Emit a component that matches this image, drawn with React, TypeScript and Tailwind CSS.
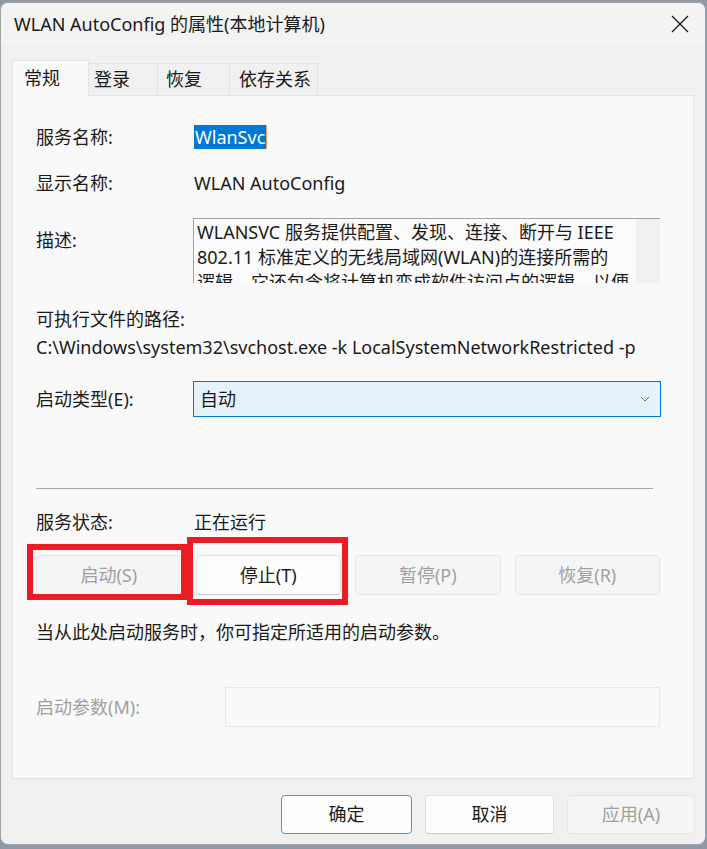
import React from "react";

type BtnProps = {
  label: string;
  disabled?: boolean;
  primary?: boolean;
  className?: string;
};

function WinButton({ label, disabled, primary, className = "" }: BtnProps) {
  const look = disabled
    ? "bg-[#f5f5f5] border-[#e6e6e6] text-[#a0a0a0]"
    : primary
    ? "bg-[#fdfdfd] border-[#4a94dd] text-[#1a1a1a]"
    : "bg-[#fdfdfd] border-[#e0e0e0] border-b-[#cccccc] text-[#1a1a1a]";
  return (
    <div
      className={`flex items-center justify-center rounded-[4px] border ${look} ${className}`}
    >
      {label}
    </div>
  );
}

function Tab({
  label,
  active,
  width,
  pad,
}: {
  label: string;
  active?: boolean;
  width: string;
  pad: string;
}) {
  return active ? (
    <div
      className={`${width} ${pad} relative z-10 -mb-px flex h-[36px] items-center border border-b-0 border-[#e3e3e3] bg-[#f9f9f9]`}
    >
      {label}
    </div>
  ) : (
    <div
      className={`${width} ${pad} flex h-[32px] items-center border border-b-0 border-l-0 border-[#e3e3e3] bg-[#f0f0f0] text-[#1a1a1a]`}
    >
      {label}
    </div>
  );
}

export default function App() {
  return (
    <div className="h-[849px] w-[707px] overflow-hidden bg-[#8f9aa6] pt-[2px] font-['Noto_Sans','Noto_Sans_CJK_SC',sans-serif] text-[18px] text-[#1a1a1a]">
      <div className="flex h-[843px] w-[706px] flex-col overflow-hidden rounded-[8px] border border-[#a3a3a3] bg-[#f0f0f0]">
        {/* Title bar */}
        <div className="flex h-[42px] items-center justify-between bg-[#f3f3f3] pl-[13px] pr-[15px]">
          <span className="leading-[26px]">WLAN AutoConfig 的属性(本地计算机)</span>
          <svg width="18" height="18" viewBox="0 0 18 18" className="mr-[1px]">
            <path d="M1 1 L17 17 M17 1 L1 17" stroke="#1a1a1a" strokeWidth="1.3" fill="none" />
          </svg>
        </div>

        {/* Tabs + page */}
        <div className="px-[11px] pt-[15px]">
          <div className="flex h-[35px] items-end">
            <Tab label="常规" active width="w-[77px]" pad="pl-[11px]" />
            <Tab label="登录" width="w-[69px]" pad="pl-[5px]" />
            <Tab label="恢复" width="w-[72px]" pad="pl-[8px]" />
            <Tab label="依存关系" width="w-[88px]" pad="pl-[9px]" />
          </div>

          <div className="h-[684px] border border-[#e3e3e3] bg-[#f9f9f9] pl-[23px]">
            {/* 服务名称 */}
            <div className="mt-[28px] flex h-[26px] items-center">
              <div className="w-[158px]">服务名称:</div>
              <span className="inline-block h-[24px] border-r border-[#f0a050] bg-[#0078d7] pl-[1px] pr-[1px] leading-[24px] text-white">
                WlanSvc
              </span>
            </div>

            {/* 显示名称 */}
            <div className="mt-[20px] flex h-[26px] items-center">
              <div className="w-[158px]">显示名称:</div>
              <div>WLAN AutoConfig</div>
            </div>

            {/* 描述 */}
            <div className="mt-[22px] flex h-[65px] items-start">
              <div className="w-[157px] pt-[9px] leading-[26px]">描述:</div>
              <div className="flex h-[65px] w-[467px] overflow-hidden border-l border-t border-[#a0a0a0] bg-[#fbfbfb]">
                <div className="flex-1 overflow-hidden pl-[3px] pt-[1px] leading-[25px] whitespace-nowrap">
                  WLANSVC 服务提供配置、发现、连接、断开与 IEEE
                  <br />
                  802.11 标准定义的无线局域网(WLAN)的连接所需的
                  <br />
                  逻辑。它还包含将计算机变成软件访问点的逻辑，以便
                </div>
                <div className="w-[24px] shrink-0 bg-[#f0f0f0]" />
              </div>
            </div>

            {/* 路径 */}
            <div className="mt-[23px] h-[26px] leading-[26px]">可执行文件的路径:</div>
            <div className="mt-[2px] h-[26px] whitespace-nowrap leading-[26px]">
              C:\Windows\system32\svchost.exe -k LocalSystemNetworkRestricted -p
            </div>

            {/* 启动类型 */}
            <div className="mt-[21px] flex h-[36px] items-center">
              <div className="w-[157px]">启动类型(E):</div>
              <div className="flex h-[36px] w-[468px] items-center justify-between border border-[#0078d4] bg-[#e5f1fb] pl-[6px] pr-[10px]">
                <span>自动</span>
                <svg width="10" height="6" viewBox="0 0 10 6">
                  <path d="M1 1 L5 5 L9 1" stroke="#707070" strokeWidth="1" fill="none" />
                </svg>
              </div>
            </div>

            {/* divider */}
            <div className="mt-[71px] h-px w-[617px] bg-[#a8a8a8]" />

            {/* 服务状态 */}
            <div className="mt-[20px] flex h-[26px] items-center">
              <div className="w-[158px]">服务状态:</div>
              <div>正在运行</div>
            </div>

            {/* buttons */}
            <div className="relative mt-[20px] grid h-[40px] w-[624px] grid-cols-4 gap-[14px]">
              <WinButton label="启动(S)" disabled />
              <WinButton label="停止(T)" />
              <WinButton label="暂停(P)" disabled />
              <WinButton label="恢复(R)" disabled />
              <div className="pointer-events-none absolute left-[-9px] top-[-11px] h-[56px] w-[160px] border-[6px] border-[#ed1c24]" />
              <div className="pointer-events-none absolute left-[151px] top-[-18px] h-[68px] w-[161px] border-[6px] border-[#ed1c24]" />
            </div>

            <div className="mt-[24px] h-[26px] leading-[26px]">
              当从此处启动服务时，你可指定所适用的启动参数。
            </div>

            {/* 启动参数 */}
            <div className="mt-[42px] flex h-[40px] items-center">
              <div className="w-[189px] text-[#a0a0a0]">启动参数(M):</div>
              <div className="h-[40px] w-[435px] border border-[#e8e8e8] bg-[#f9f9f9]" />
            </div>
          </div>
        </div>

        {/* Footer */}
        <div className="flex justify-end gap-[13px] pr-[10px] pt-[16px]">
          <WinButton label="确定" primary className="h-[39px] w-[131px]" />
          <WinButton label="取消" className="h-[39px] w-[129px]" />
          <WinButton label="应用(A)" disabled className="h-[39px] w-[128px]" />
        </div>
      </div>
    </div>
  );
}
